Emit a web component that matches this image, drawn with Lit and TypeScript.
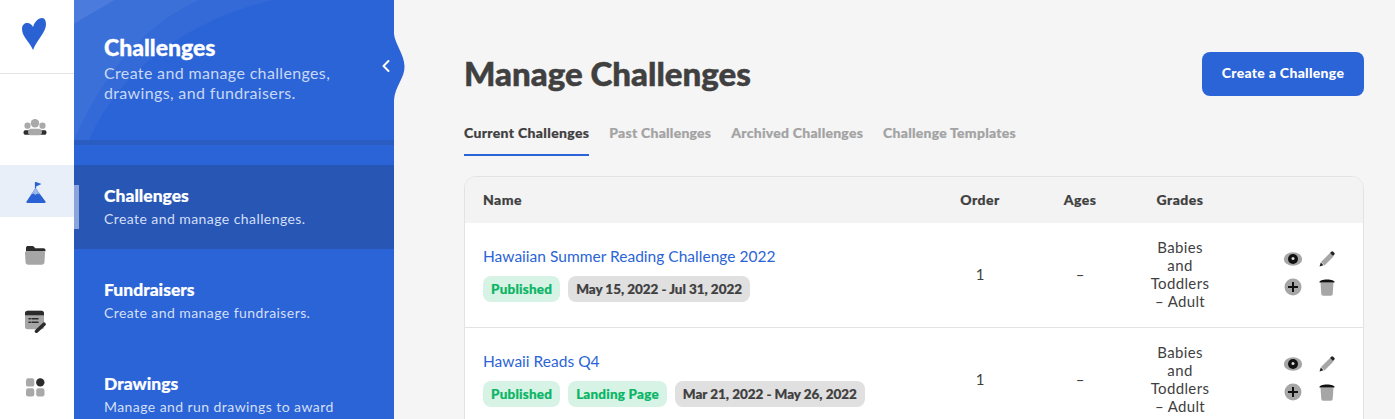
import { html, css, LitElement, svg } from "lit";
import { customElement } from "lit/decorators.js";

const railIcons = [
  svg`<g transform="translate(0 3.200)"><circle cx="14" cy="7" r="4.200" fill="#a9a9a9"/><circle cx="6.500" cy="9.500" r="3.100" fill="#a9a9a9"/><circle cx="21.500" cy="9.500" r="3.100" fill="#a9a9a9"/><path d="M4 14h20c2 0 2 4.500 0 4.500H4c-2 0-2-4.500 0-4.500z" fill="#2e2e2e"/><path d="M10 12.500h8c2 0 3 2 3 3.500 0 1.500-1 3-3 3h-8c-2 0-3-1.500-3-3 0-1.500 1-3.500 3-3.500z" fill="#a9a9a9"/></g>`,
  svg`<path d="M14.500 5v7" stroke="#2a62d4" stroke-width="1.200"/><path d="M15 5l5.500 2-5.500 2.500z" fill="#2a62d4"/><path d="M14.500 11L24.500 24.500q.5 1.500-1 1.500H6.500q-1.500 0-1-1.500z" fill="#2a62d4"/><path d="M14.500 11l4.500 6.500-2.500-1-2 1.500-2-1.500-2.500 1z" fill="#9db8ea"/>`,
  svg`<g transform="translate(0 1.300)"><path d="M5 8V5.500C5 4.500 6 3.800 7 3.800h4.500c1.200 0 2 1 2.500 2.200h8.500c1.200 0 2 .8 2 2V9H5z" fill="#2b2b2b"/><path d="M4 10.500c0-1 .8-1.800 1.800-1.800h16.400c1 0 1.800 .8 1.800 1.800l-.5 9c0 2-1.200 3-2.800 3H7.300c-1.600 0-2.800-1-2.800-3z" fill="#a6a6a6"/></g>`,
  svg`<g transform="translate(0 2.200)"><rect x="4" y="3.500" width="19" height="18.500" rx="2.500" fill="#a6a6a6"/><path d="M4 8V6c0-1.400 1.100-2.500 2.500-2.500h14c1.400 0 2.500 1.100 2.500 2.500v2z" fill="#2b2b2b"/><path d="M8 11.500h1.300M8 15h1.300M11 11.500h6M11 15h6" stroke="#2b2b2b" stroke-width="1.500" stroke-linecap="round"/><path d="M15.500 24l7.500-7" stroke="#2b2b2b" stroke-width="3.600" stroke-linecap="round"/></g>`,
  svg`<g transform="translate(0 4.500)"><rect x="5" y="4.800" width="8.300" height="8.300" rx="2.200" fill="#a9a9a9"/><rect x="15.200" y="14.700" width="8.300" height="8.300" rx="2.200" fill="#a9a9a9"/><rect x="5" y="14.700" width="8.300" height="8.300" rx="2.200" fill="#a9a9a9"/><circle cx="19.300" cy="8.900" r="4.200" fill="#2b2b2b"/></g>`,
];

const challenges = [
  {
    name: "Hawaiian Summer Reading Challenge 2022",
    tags: ["Published"],
    dates: "May 15, 2022 - Jul 31, 2022",
  },
  {
    name: "Hawaii Reads Q4",
    tags: ["Published", "Landing Page"],
    dates: "Mar 21, 2022 - May 26, 2022",
  },
];

const navItems = [
  { title: "Challenges", desc: "Create and manage challenges.", active: true },
  { title: "Fundraisers", desc: "Create and manage fundraisers." },
  { title: "Drawings", desc: "Manage and run drawings to award" },
];

@customElement("app-root")
export class AppRoot extends LitElement {
  static styles = css`
    :host {
      display: flex;
      height: 100vh;
      overflow: hidden;
      background: #f5f5f5;
      font-family: "Lato", "Open Sans", sans-serif;
      color: #3f3f3f;
    }

    .rail {
      width: 74px;
      flex-shrink: 0;
      background: #fff;
    }

    .logo {
      height: 74px;
      border-bottom: 1px solid #e4e4e4;
      display: flex;
      align-items: center;
      justify-content: center;
      padding-right: 6px;
      padding-bottom: 5px;
      box-sizing: border-box;
    }

    .rail-nav {
      padding-top: 27px;
      display: flex;
      flex-direction: column;
      gap: 12px;
    }

    .rail-item {
      height: 52px;
      display: flex;
      align-items: center;
      justify-content: center;
      padding-right: 5px;
    }

    .rail-item.active {
      background: #e9eff9;
    }

    .panel {
      position: relative;
      width: 320px;
      flex-shrink: 0;
      background: #2b64d6;
      color: #fff;
    }

    .panel-head {
      position: relative;
      height: 106px;
      padding: 34px 30px 0;
      border-bottom: 5px solid #2a5cc2;
      overflow: hidden;
      margin-bottom: 20px;
    }

    .panel-head .arcs {
      position: absolute;
      left: 0;
      top: 0;
    }

    .panel-head h2 {
      position: relative;
      margin: 0;
      font-size: 23px;
      line-height: 26px;
      font-weight: 900;
      -webkit-text-stroke: 0.3px currentColor;
    }

    .panel-head p {
      position: relative;
      margin: 3px 0 0;
      font-size: 16px;
      line-height: 20px;
      letter-spacing: 0.35px;
      color: #c9d8f5;
    }

    .notch {
      position: absolute;
      left: 320px;
      top: 34px;
    }

    .collapse {
      position: absolute;
      left: 306px;
      top: 59px;
    }

    .nav-item {
      position: relative;
      height: 94px;
      padding: 21px 30px 0;
      box-sizing: border-box;
    }

    .nav-item.active {
      background: #2856b5;
      height: 84px;
      margin-bottom: 10px;
    }

    .nav-item.active::before {
      content: "";
      position: absolute;
      left: 0;
      top: 20px;
      width: 5px;
      height: 44px;
      background: #8aa5db;
    }

    .nav-item h3 {
      margin: 0;
      font-size: 17.500px;
      line-height: 20px;
      font-weight: 900;
      -webkit-text-stroke: 0.2px currentColor;
    }

    .nav-item p {
      margin: 4px 0 0;
      font-size: 14px;
      line-height: 18px;
      letter-spacing: 0.43px;
      color: #d3dff7;
    }

    .main {
      flex: 1;
      min-width: 0;
      padding: 52px 31px 0 70px;
    }

    .title-row {
      display: flex;
      justify-content: space-between;
      align-items: flex-start;
    }

    h1 {
      margin: 0;
      font-size: 33.100px;
      line-height: 42px;
      font-weight: 900;
      color: #404040;
      -webkit-text-stroke: 0.5px currentColor;
    }

    .create {
      width: 162px;
      height: 44px;
      padding: 0 0 3px;
      border: none;
      border-radius: 8px;
      background: #2b64d6;
      color: #fff;
      font: 900 14px "Lato", sans-serif;
      letter-spacing: 0.3px;
    }

    .tabs {
      display: flex;
      gap: 20px;
      margin-top: 26px;
      height: 34px;
    }

    .tab {
      height: 32px;
      font-size: 14px;
      line-height: 22px;
      font-weight: 900;
      letter-spacing: 0.24px;
      color: #a3a3a3;
      -webkit-text-stroke: 0.2px currentColor;
    }

    .tab.active {
      color: #3f3f3f;
      letter-spacing: 0.33px;
      border-bottom: 2px solid #2b64d6;
    }

    .table {
      margin-top: 20px;
      background: #fff;
      border: 1px solid #e3e3e3;
      border-radius: 12px 12px 0 0;
      overflow: hidden;
    }

    .row {
      display: grid;
      grid-template-columns: 465px 100px 100px 100px 1fr;
      align-items: center;
      box-sizing: border-box;
      padding-bottom: 2px;
    }

    .head {
      height: 46px;
      background: #f3f3f3;
      font-size: 14px;
      font-weight: 900;
      letter-spacing: 0.45px;
      -webkit-text-stroke: 0.2px currentColor;
    }

    .body-row {
      height: 105px;
      border-bottom: 1px solid #e3e3e3;
      font-size: 15px;
    }

    .name {
      padding-left: 18px;
    }

    .body-row .name {
      padding-bottom: 1px;
    }

    .center {
      text-align: center;
    }

    .grades {
      padding: 0 20px;
      line-height: 18px;
      letter-spacing: 0.35px;
    }

    .link {
      color: #2b64d6;
      font-size: 15.500px;
      line-height: 20px;
      letter-spacing: 0.02px;
    }

    .tags {
      display: flex;
      gap: 8px;
      margin-top: 10px;
    }

    .tag {
      height: 26px;
      padding: 0 8px;
      border-radius: 8px;
      font-size: 13.500px;
      line-height: 26px;
      font-weight: 900;
      letter-spacing: 0.2px;
      background: #d7f3e6;
      color: #0ab565;
      -webkit-text-stroke: 0.2px currentColor;
    }

    .tag.date {
      background: #e0e0e0;
      color: #3f3f3f;
      letter-spacing: -0.05px;
    }

    .actions {
      display: grid;
      grid-template-columns: 34px 34px;
      grid-auto-rows: 28px;
      justify-content: end;
      justify-items: center;
      align-items: center;
      margin: -2px 19px 0 0;
    }
  `;

  private actionIcons() {
    return html`
      <div class="actions">
        <svg width="20" height="16" viewBox="0 0 20 16">
          <ellipse cx="10" cy="8" rx="9.200" ry="6.800" fill="#a6a6a6" />
          <circle cx="10" cy="8" r="5" fill="#111" />
          <circle cx="10" cy="7.500" r="1.500" fill="#ddd" />
        </svg>
        <svg width="18" height="18" viewBox="0 0 18 18">
          <path d="M3 12L12 3l3.500 3.500-9 9z" fill="#a6a6a6" />
          <path d="M12 3l1.200-1.200c.7-.7 1.300-.7 2 0l1 1c.7 .7 .7 1.300 0 2L15 6z" fill="#222" />
          <path d="M2.800 12.500L1.500 16.500l4-1.300z" fill="#222" />
        </svg>
        <svg width="18" height="18" viewBox="0 0 18 18">
          <circle cx="9" cy="9" r="8.500" fill="#a6a6a6" />
          <path d="M9 4v10M4 9h10" stroke="#111" stroke-width="2" />
        </svg>
        <svg width="18" height="18" viewBox="0 0 18 18">
          <path d="M2.500 4.500h13l-.8 11.500c-.1 1-.8 1.700-1.800 1.700H5.100c-1 0-1.700-.7-1.800-1.700z" fill="#a6a6a6" />
          <path d="M1.500 3.800c0-1 3-2.300 7.500-2.300s7.500 1.300 7.500 2.300v.7h-15z" fill="#111" />
        </svg>
      </div>
    `;
  }

  render() {
    return html`
      <aside class="rail">
        <div class="logo">
          <svg width="24" height="32" viewBox="0 0 24 32">
            <path d="M11 32C8 24 0 19 0 11 0 6 3.500 4.500 6 5c2.500 .5 4 2 5 4C12.500 4 16 0 20 0c3 0 4 3 4 6.500C24 14 15 22 11 32z" fill="#2a62d4" />
          </svg>
        </div>
        <div class="rail-nav">
          ${railIcons.map(
            (icon, i) => html`
              <div class="rail-item ${i === 1 ? "active" : ""}">
                <svg width="28" height="28" viewBox="0 0 28 28">${icon}</svg>
              </div>
            `
          )}
        </div>
      </aside>

      <nav class="panel">
        <div class="panel-head">
          <svg class="arcs" width="320" height="140" viewBox="0 0 320 140">
            <path d="M0 0h125C80 20 35 60 0 140z" fill="#fff" opacity=".05" />
            <path d="M0 0h200C130 15 50 60 15 140H0z" fill="#fff" opacity=".04" />
            <path d="M0 0h40C28 8 12 16 0 24z" fill="#fff" opacity=".08" />
          </svg>
          <h2>Challenges</h2>
          <p>Create and manage challenges,<br />drawings, and fundraisers.</p>
        </div>
        ${navItems.map(
          (item) => html`
            <div class="nav-item ${item.active ? "active" : ""}">
              <h3>${item.title}</h3>
              <p>${item.desc}</p>
            </div>
          `
        )}
        <svg class="notch" width="11" height="66" viewBox="0 0 11 66">
          <path d="M0 0c1 10 10 20 10.500 32C11 44 1 52 0 66z" fill="#2b64d6" />
        </svg>
        <svg class="collapse" width="12" height="14" viewBox="0 0 12 14">
          <path d="M8.500 2L3.500 7l5 5" fill="none" stroke="#fff" stroke-width="2" stroke-linecap="round" stroke-linejoin="round" />
        </svg>
      </nav>

      <main class="main">
        <div class="title-row">
          <h1>Manage Challenges</h1>
          <button class="create">Create a Challenge</button>
        </div>
        <div class="tabs">
          <div class="tab active">Current Challenges</div>
          <div class="tab">Past Challenges</div>
          <div class="tab">Archived Challenges</div>
          <div class="tab">Challenge Templates</div>
        </div>
        <div class="table">
          <div class="row head">
            <div class="name">Name</div>
            <div class="center">Order</div>
            <div class="center">Ages</div>
            <div class="center">Grades</div>
            <div></div>
          </div>
          ${challenges.map(
            (c) => html`
              <div class="row body-row">
                <div class="name">
                  <div class="link">${c.name}</div>
                  <div class="tags">
                    ${c.tags.map((t) => html`<span class="tag">${t}</span>`)}
                    <span class="tag date">${c.dates}</span>
                  </div>
                </div>
                <div class="center">1</div>
                <div class="center">–</div>
                <div class="center grades">Babies and Toddlers – Adult</div>
                ${this.actionIcons()}
              </div>
            `
          )}
        </div>
      </main>
    `;
  }
}
